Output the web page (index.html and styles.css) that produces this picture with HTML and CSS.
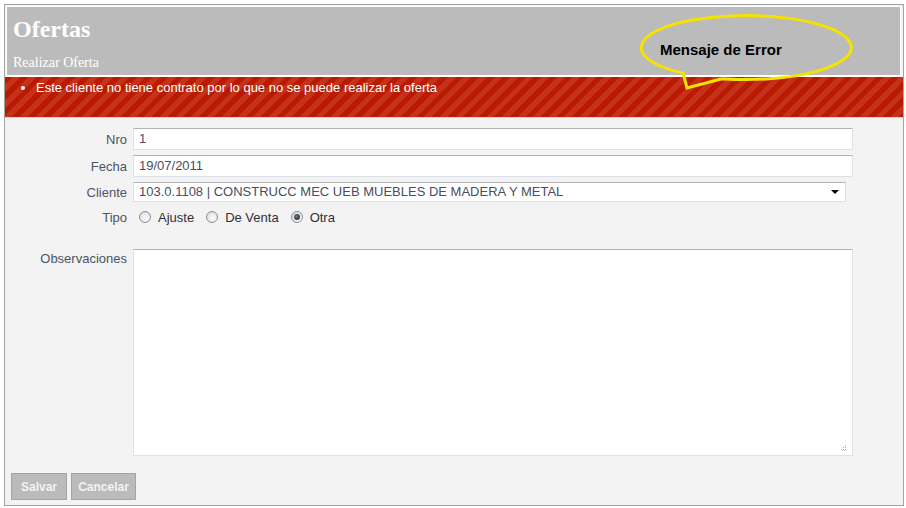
FILE: index.html
```html
<!DOCTYPE html>
<html lang="es">
<head>
<meta charset="utf-8">
<title>Ofertas</title>
<link rel="stylesheet" href="styles.css">
</head>
<body>
<div class="frame">
  <div class="header">
    <h1 class="title">Ofertas</h1>
    <div class="subtitle">Realizar Oferta</div>
  </div>
  <div class="errors">
    <ul class="error-list">
      <li>Este cliente no tiene contrato por lo que no se puede realizar la oferta</li>
    </ul>
  </div>
  <div class="form">
    <div class="row">
      <label class="label">Nro</label>
      <div class="field input">1</div>
    </div>
    <div class="row">
      <label class="label">Fecha</label>
      <div class="field input">19/07/2011</div>
    </div>
    <div class="row">
      <label class="label">Cliente</label>
      <div class="field select">
        <span>103.0.1108 | CONSTRUCC MEC UEB MUEBLES DE MADERA Y METAL</span>
        <span class="arrow"></span>
      </div>
    </div>
    <div class="row row-tipo">
      <label class="label">Tipo</label>
      <div class="radios">
        <span class="radio"></span><span class="radio-text">Ajuste</span>
        <span class="radio"></span><span class="radio-text">De Venta</span>
        <span class="radio checked"></span><span class="radio-text">Otra</span>
      </div>
    </div>
    <div class="row row-obs">
      <label class="label">Observaciones</label>
      <div class="field textarea">
        <svg class="grip" width="7" height="7" viewBox="0 0 7 7" xmlns="http://www.w3.org/2000/svg">
          <rect x="5" y="0" width="1" height="1" fill="#a8a8a8"/>
          <rect x="3" y="2" width="1" height="1" fill="#a8a8a8"/>
          <rect x="5" y="2" width="1" height="1" fill="#a8a8a8"/>
          <rect x="1" y="4" width="1" height="1" fill="#a8a8a8"/>
          <rect x="3" y="4" width="1" height="1" fill="#a8a8a8"/>
          <rect x="5" y="4" width="1" height="1" fill="#a8a8a8"/>
          <rect x="2" y="5" width="1" height="1" fill="#d6d6d6"/>
          <rect x="4" y="5" width="1" height="1" fill="#d6d6d6"/>
          <rect x="6" y="5" width="1" height="1" fill="#d6d6d6"/>
        </svg>
      </div>
    </div>
    <div class="buttons">
      <button class="btn btn-save">Salvar</button>
      <button class="btn btn-cancel">Cancelar</button>
    </div>
  </div>
  <svg class="callout" width="240" height="95" viewBox="630 5 240 95" xmlns="http://www.w3.org/2000/svg">
    <path d="M722 78.7 A105 32 0 1 0 683 73.1 L687 88 L722 78.7" fill="none" stroke="#f4e300" stroke-width="3" stroke-linejoin="miter"/>
    <text x="660" y="55" class="callout-text">Mensaje de Error</text>
  </svg>
</div>
</body>
</html>
```
FILE: styles.css
```css
* { box-sizing: border-box; }
html, body { margin: 0; padding: 0; background: #fff; }
body { width: 906px; height: 508px; overflow: hidden; }

.frame {
  position: relative;
  margin: 4px;
  width: 900px;
  height: 502px;
  border: 1px solid #a3a3a3;
  background: #f3f3f3;
  display: flex;
  flex-direction: column;
}

.header {
  margin: 1px 2px 0 1px;
  border: 1px solid #fff;
  border-width: 1px 1px 2px 1px;
  background: #bbbbbb;
  height: 71px;
  padding: 0 0 0 6px;
  color: #fff;
  font-family: "Liberation Serif", "Times New Roman", serif;
}
.title {
  margin: 0;
  padding-top: 7px;
  font-size: 24px;
  line-height: 30px;
  font-weight: bold;
}
.subtitle {
  margin-top: 11px;
  font-size: 14px;
  line-height: 16px;
}

.errors {
  height: 41px;
  background: repeating-linear-gradient(135deg, #ba1b00 0, #ba1b00 5.5px, #c4321b 5.5px, #c4321b 11px);
  border-bottom: 1px solid #d6d6d6;
  color: #fff;
  font-family: "Liberation Sans", Arial, sans-serif;
  font-size: 13px;
}
.error-list {
  margin: 0;
  padding: 3px 0 0 31px;
  line-height: 15px;
}
.error-list li { list-style: disc; }

.form {
  flex: 1;
  padding: 10px 0 0 0;
  font-family: "Liberation Sans", Arial, sans-serif;
  font-size: 13px;
  color: #4c5366;
}
.row {
  display: flex;
  align-items: center;
  margin-bottom: 5px;
}
.label {
  width: 128px;
  text-align: right;
  padding-right: 6px;
  flex: none;
}
.field {
  background: #fff;
  border: 1px solid #dde2e9;
  border-top-color: #b3b3b3;
  color: #4a4d5e;
  padding: 0 5px;
}
.input {
  width: 720px;
  height: 22px;
  line-height: 20px;
}
.select {
  width: 713px;
  height: 20px;
  line-height: 18px;
  display: flex;
  justify-content: space-between;
  align-items: center;
}
.arrow {
  width: 0; height: 0;
  border-left: 4px solid transparent;
  border-right: 4px solid transparent;
  border-top: 4px solid #000;
  margin-right: 1px;
}
.row-tipo {
  margin-top: 5px;
  height: 20px;
}
.radios {
  display: flex;
  align-items: center;
}
.radio {
  width: 12px;
  height: 12px;
  border-radius: 50%;
  border: 1px solid #8e8f8f;
  background: radial-gradient(circle at 60% 65%, #fdfdfd 0, #e6e6e6 60%, #cfcfcf 100%);
  margin: 0 7px 0 7px;
  position: relative;
}
.radio.checked::after {
  content: "";
  position: absolute;
  left: 2px; top: 2px;
  width: 6px; height: 6px;
  border-radius: 50%;
  background: radial-gradient(circle at 40% 40%, #6b7f8f 0, #1f2a33 80%);
}
.radio-text { margin-right: 5px; color: #2e3140; }
.radios .radio:first-child { margin-left: 6px; }

.row-obs {
  margin-top: 22px;
  align-items: flex-start;
}
.row-obs .label { padding-top: 2px; }
.textarea {
  width: 720px;
  height: 207px;
  position: relative;
}
.grip {
  position: absolute;
  right: 5px;
  bottom: 3px;
}

.buttons {
  display: flex;
  gap: 4px;
  padding: 12px 0 0 6px;
}
.btn {
  height: 27px;
  padding: 0;
  background: #bbbbbb;
  border: 1px solid #a4a4a4;
  color: #f2f2f2;
  font-family: "Liberation Sans", Arial, sans-serif;
  font-size: 12px;
  font-weight: bold;
  text-align: center;
}
.btn-save { width: 56px; }
.btn-cancel { width: 65px; }

.callout {
  position: absolute;
  left: 625px;
  top: 0px;
  overflow: visible;
}
.callout-text {
  font-family: "Liberation Sans", Arial, sans-serif;
  font-size: 15px;
  font-weight: bold;
  fill: #000;
}
```
